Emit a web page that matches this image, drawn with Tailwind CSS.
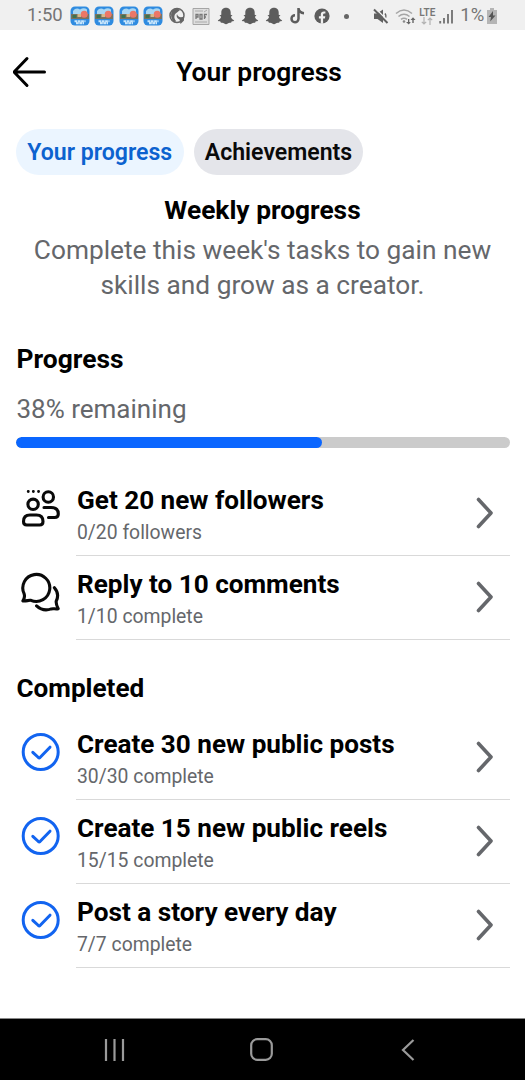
<!DOCTYPE html>
<html lang="en">
<head>
<meta charset="utf-8">
<title>Your progress</title>
<script src="https://cdn.jsdelivr.net/npm/@tailwindcss/browser@4"></script>
</head>
<body class="bg-white font-['Roboto',sans-serif] text-black">
<svg class="hidden">
  <symbol id="chev" viewBox="0 0 20 32"><path d="M3.500 2.500 16 16 3.500 29.500" fill="none" stroke="#65676b" stroke-width="3.600" stroke-linecap="round" stroke-linejoin="round"/></symbol>
  <symbol id="check" viewBox="0 0 40 40"><circle cx="19.700" cy="20" r="17.500" fill="none" stroke="#1264f0" stroke-width="3"/><path d="M11.800 20.300l5.600 5.200q.8.700 1.600 0L29 15.200" fill="none" stroke="#1264f0" stroke-width="3" stroke-linecap="round" stroke-linejoin="round"/></symbol>
  <symbol id="game" viewBox="0 0 20 20"><rect x=".5" y=".5" width="19" height="19" rx="4.500" fill="#2f8be0"/><path d="M3 5q3-4 7-1.500 4-2.500 7 0V8H3z" fill="#a9d6f2"/><path d="M1 8h18v5H1z" fill="#7a7260"/><path d="M2.500 9h4v3h-4z" fill="#3c7350"/><circle cx="14.200" cy="8.300" r="3.500" fill="#ec7767"/><path d="M7.500 8h3.500v3H7.500z" fill="#d6b98a"/><path d="M4.500 15.300h11M6 17.300h8" stroke="#c9e6fb" stroke-width="1.900" stroke-dasharray="2.800 .5"/></symbol>
  <symbol id="ghost" viewBox="0 0 18 18"><path d="M9 .8C5.800.8 4.300 3 4.300 5.500v2.300l-1.800.6 1.600 1.400C3.700 11.600 2.400 12.700.8 13.200c.3 1 1.300 1 2.600 1.200l.5 1.400c1.600-.3 2.500 0 3.300.7 1.100.9 2.500.9 3.600 0 .8-.7 1.700-1 3.300-.7l.5-1.400c1.300-.2 2.300-.2 2.600-1.200-1.600-.5-2.900-1.600-3.300-3.400l1.600-1.400-1.800-.6V5.500C13.700 3 12.200.8 9 .8z" fill="#5c5c5c"/></symbol>
</svg>
<div class="flex h-[1080px] w-[525px] flex-col overflow-hidden">
  <div class="flex h-[30px] shrink-0 items-center bg-[#f0f0f0] pl-[27px] pt-[2px] text-[18.500px] text-[#757575]">
    <span class="w-[43px] whitespace-nowrap">1:50</span>
    <div class="flex gap-[4.300px]">
      <svg class="size-5"><use href="#game"/></svg><svg class="size-5"><use href="#game"/></svg><svg class="size-5"><use href="#game"/></svg><svg class="size-5"><use href="#game"/></svg>
    </div>
    <svg class="ml-[6px] h-[18px] w-[17px]" viewBox="0 0 17 18"><circle cx="8" cy="8.500" r="7" fill="none" stroke="#666" stroke-width="1.500"/><path d="M4 2.500C1 6 1.500 12 5.500 15.500L7 14C4.500 11 5 7 8 5.500L11 3Q7 .5 4 2.500z" fill="#666"/><path d="M8 7c.5 3 3.500 4 7 2.500v4L11.500 17l-1-4.500C8 11.500 7 9.500 8 7z" fill="#666"/></svg>
    <svg class="ml-[6px] h-[19px] w-[18px]" viewBox="0 0 18 19"><path d="M1 1.500h16v16H1z" fill="#dedede" stroke="#a5a5a5"/><path d="M3 4h8M12 5l3-2M3 15h12" stroke="#aaa"/><path d="M4 12V7.500h2V10H4M8 7.500V12h2V7.500zM12.500 12V7.500H15M12.500 10H14" fill="none" stroke="#777" stroke-width="1.300"/></svg>
    <div class="ml-[7px] flex gap-[6.200px]">
      <svg class="size-[18px]"><use href="#ghost"/></svg><svg class="size-[18px]"><use href="#ghost"/></svg><svg class="size-[18px]"><use href="#ghost"/></svg>
    </div>
    <svg class="ml-[7px] h-[18px] w-[16px]" viewBox="0 0 16 18"><path d="M8.500 1v10.800a3.500 3.500 0 1 1-3.500-3.600M8.500 1.500c.5 3 2.500 4.500 5.500 4.700" fill="none" stroke="#5c5c5c" stroke-width="2.500"/></svg>
    <svg class="ml-[8px] size-4" viewBox="0 0 16 16"><circle cx="8" cy="8" r="7.600" fill="#5c5c5c"/><path d="M6.800 15.800v-5.400H4.900V8.200h1.900V6.600C6.800 4.500 8 3.400 10 3.400l1.400.1v1.900h-1c-1 0-1.300.6-1.300 1.300v1.500h2.200l-.4 2.200H9.100v5.400z" fill="#f0f0f0"/></svg>
    <div class="ml-[14px] size-[5px] rounded-full bg-[#666]"></div>
    <svg class="ml-[24px] h-[17px] w-[16px]" viewBox="0 0 16 17"><path d="M1 5.500h3l6-4v13.500L4.500 11H1z" fill="#606060"/><path d="M2.500 .5 16 14" stroke="#f0f0f0" stroke-width="1.400"/><path d="M1 1.500 14.500 15" stroke="#606060" stroke-width="2"/><path d="M12 5.500q1.500 2 .8 4" fill="none" stroke="#606060" stroke-width="1.400"/></svg>
    <svg class="ml-[6px] h-[17px] w-[21px]" viewBox="0 0 21 17"><path d="M1 5.500q8-7 16 0M3.500 8.500q5.500-4.500 11 0M6 11.300q3-2.200 6 0" fill="none" stroke="#a5a5a5" stroke-width="1.600"/><circle cx="9" cy="13.500" r="1.300" fill="#888"/><path d="M13 11v3h-2l2.800 2.500 2-2.500h-1.500v-3zM17.300 15v-3h-1.800l2.500-2.800L20.500 12h-1.800v3z" fill="#666"/></svg>
    <div class="ml-[3px] flex w-[16px] flex-col items-center">
      <span class="text-[10px] font-semibold leading-[9px] text-[#777]">LTE</span>
      <svg class="h-[8px] w-[12px]" viewBox="0 0 12 8"><path d="M3 0v7M.8 4.800 3 7l2.200-2.200M9 8V1M6.800 3.200 9 1l2.200 2.200" fill="none" stroke="#b3b3b3" stroke-width="1.200"/></svg>
    </div>
    <svg class="ml-[4px] h-[15px] w-[15px]" viewBox="0 0 15 15"><path d="M1.200 12v2.500M5 9v5.500M9 5v9.500M13 1v13.500" stroke="#777" stroke-width="1.900"/></svg>
    <span class="ml-[6px] w-[25px] whitespace-nowrap">1%</span>
    <svg class="ml-[2px] h-[16px] w-[10px]" viewBox="0 0 10 16"><path d="M0 2h3V0h4v2h3v14H0z" fill="#b5b5b5"/><path d="M6 3 1.500 9H4l-.8 4.500L8.500 7.500H6z" fill="#555"/></svg>
  </div>
  <div class="flex h-[84px] shrink-0 items-center pl-[11px]">
    <svg class="-mt-px h-[32px] w-[36px]" viewBox="0 0 36 32"><path d="M16 2.500 3.500 15.500v1L16 29.500M3.500 16H33.500" fill="none" stroke="#000" stroke-width="3" stroke-linecap="round" stroke-linejoin="round"/></svg>
    <h1 class="-ml-[47px] w-[518px] shrink-0 text-center text-[26.400px] font-semibold leading-8">Your progress</h1>
  </div>
  <div class="mt-[15px] flex h-[46px] shrink-0 gap-[10px] pl-[15.500px] text-[23.100px] font-semibold">
    <div class="flex w-[168.500px] items-center justify-center rounded-full bg-[#ebf5ff] pt-[2px] text-[#0c62cf]">Your progress</div>
    <div class="flex w-[169px] items-center justify-center rounded-full bg-[#e4e5ea] pt-[2px] text-[#0a0a0a]">Achievements</div>
  </div>
  <div class="mt-[17px] text-center">
    <h2 class="text-[26.300px] font-bold leading-[36px]">Weekly progress</h2>
    <p class="mt-[5px] whitespace-nowrap text-[26.250px] leading-[35px] text-[#65676b]">Complete this week's tasks to gain new<br>skills and grow as a creator.</p>
  </div>
  <div class="mt-[38px] px-[15.500px]">
    <h2 class="pl-px text-[26.400px] font-bold leading-[36px]">Progress</h2>
    <p class="mt-[15px] pl-px text-[26px] leading-[35px] text-[#65676b]">38% remaining</p>
    <div class="mt-[10px] h-[10.500px] overflow-hidden rounded-full bg-[#cbcbcb]"><div class="h-full rounded-full bg-[#0a66ff]" style="width:62%"></div></div>
  </div>
  <div class="mt-[24px] pl-[21px] pr-[15px]">
    <div class="flex h-[84px]">
      <svg class="mt-[16px] size-10" viewBox="0 0 40 40" fill="none" stroke="#0a0a0a" stroke-width="3.100" stroke-linecap="round"><circle cx="12.100" cy="16.300" r="5.200"/><circle cx="27.300" cy="9" r="5.200"/><path d="M2.500 33.500q0-6.500 6.500-6.500h6.500q6.500 0 6.500 6.500c0 2.200-1.500 3.500-3.300 3.500H5.800c-1.800 0-3.300-1.300-3.300-3.500z"/><path d="M23 19.500H30q7.300 0 7.300 6.500 0 3.500-3.600 3.500H27.500"/><path d="M7.200 3.500h.1M12.300 3.500h.1M17.500 3.500h.1" stroke-width="2.800"/></svg>
      <div class="ml-[15px] flex flex-1 border-b border-[#d9d9d9]">
        <div class="flex-1 pl-px pt-[10px]"><h3 class="text-[26.100px] font-bold leading-[36px]">Get 20 new followers</h3><p class="mt-px text-[19.350px] leading-[27px] text-[#65676b]">0/20 followers</p></div>
        <svg class="mr-[15px] mt-[25px] h-8 w-5"><use href="#chev"/></svg>
      </div>
    </div>
    <div class="flex h-[84px]">
      <svg class="mt-[16px] size-10" viewBox="0.600 0.300 40 40" fill="none" stroke="#0a0a0a" stroke-width="3.100" stroke-linecap="round" stroke-linejoin="round"><path d="M2.500 29.200C4 27 4.500 24.500 3.700 22A13.500 13.500 0 1 1 10.500 28.600C8 28.200 5.500 29.800 2.500 29.200z"/><path d="M34 16c3.500 4 4 9 1.800 13.500-.3 2.500 .7 5 2 7.500-2.500.8-4.500-.5-6.800.2-5 1.800-10.500 1-14.800-3"/></svg>
      <div class="ml-[15px] flex flex-1 border-b border-[#d9d9d9]">
        <div class="flex-1 pl-px pt-[10px]"><h3 class="text-[26.100px] font-bold leading-[36px]">Reply to 10 comments</h3><p class="mt-px text-[19.350px] leading-[27px] text-[#65676b]">1/10 complete</p></div>
        <svg class="mr-[15px] mt-[25px] h-8 w-5"><use href="#chev"/></svg>
      </div>
    </div>
  </div>
  <h2 class="mt-[30px] pl-[16.500px] text-[26.100px] font-bold leading-[36px]">Completed</h2>
  <div class="mt-[10px] pl-[21px] pr-[15px]">
    <div class="flex h-[84px]">
      <svg class="mt-[16px] size-10"><use href="#check"/></svg>
      <div class="ml-[15px] flex flex-1 border-b border-[#d9d9d9]">
        <div class="flex-1 pl-px pt-[10px]"><h3 class="text-[26.100px] font-bold leading-[36px]">Create 30 new public posts</h3><p class="mt-px text-[19.350px] leading-[27px] text-[#65676b]">30/30 complete</p></div>
        <svg class="mr-[15px] mt-[25px] h-8 w-5"><use href="#chev"/></svg>
      </div>
    </div>
    <div class="flex h-[84px]">
      <svg class="mt-[16px] size-10"><use href="#check"/></svg>
      <div class="ml-[15px] flex flex-1 border-b border-[#d9d9d9]">
        <div class="flex-1 pl-px pt-[10px]"><h3 class="text-[26.100px] font-bold leading-[36px]">Create 15 new public reels</h3><p class="mt-px text-[19.350px] leading-[27px] text-[#65676b]">15/15 complete</p></div>
        <svg class="mr-[15px] mt-[25px] h-8 w-5"><use href="#chev"/></svg>
      </div>
    </div>
    <div class="flex h-[84px]">
      <svg class="mt-[16px] size-10"><use href="#check"/></svg>
      <div class="ml-[15px] flex flex-1 border-b border-[#d9d9d9]">
        <div class="flex-1 pl-px pt-[10px]"><h3 class="text-[26.200px] font-bold leading-[36px]">Post a story every day</h3><p class="mt-px text-[19.350px] leading-[27px] text-[#65676b]">7/7 complete</p></div>
        <svg class="mr-[15px] mt-[25px] h-8 w-5"><use href="#chev"/></svg>
      </div>
    </div>
  </div>
  <div class="mt-auto flex h-[62px] shrink-0 items-center border-t border-[#888] bg-black">
    <svg class="ml-[104px] h-[22px] w-[22px]" viewBox="0 0 22 22"><path d="M2 0v22M10.500 0v22M19 0v22" stroke="#9a9a9a" stroke-width="2.200"/></svg>
    <svg class="ml-[124px] size-[23px]" viewBox="0 0 23 23"><rect x="1.200" y="1.200" width="20.600" height="20.600" rx="6" fill="none" stroke="#9a9a9a" stroke-width="2.200"/></svg>
    <svg class="ml-[128px] h-[22px] w-[14px]" viewBox="0 0 14 22"><path d="M12.500 1 2 11l10.500 10" fill="none" stroke="#9a9a9a" stroke-width="2.200"/></svg>
  </div>
</div>
</body>
</html>
